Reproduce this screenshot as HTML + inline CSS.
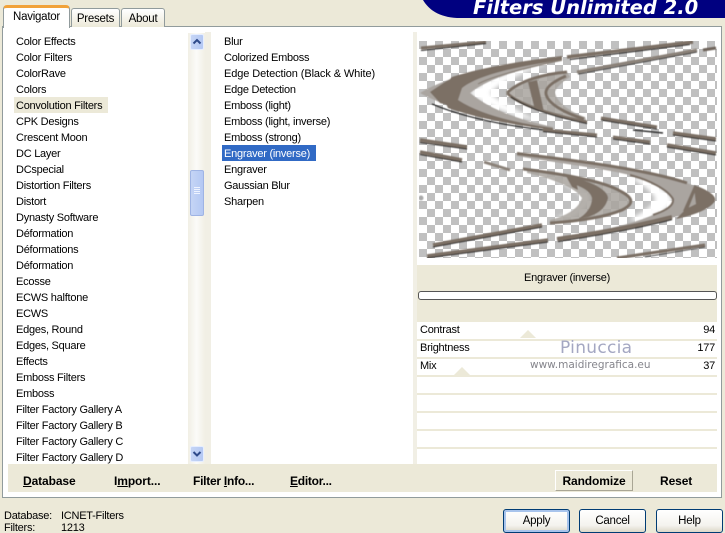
<!DOCTYPE html>
<html><head><meta charset="utf-8">
<style>
html,body{margin:0;padding:0;width:725px;height:533px;overflow:hidden;background:#ece9d8}
body{position:relative;font-family:"Liberation Sans",sans-serif;font-size:11px;color:#000;letter-spacing:-.25px}
.a{position:absolute}
.t{position:absolute;white-space:nowrap;line-height:16px;height:16px}
.b{font-weight:bold;font-size:12px;letter-spacing:-.1px}
u{text-decoration:underline}
.row{position:absolute;left:417px;width:300px;height:16px;background:#fff;border-bottom:2px solid #ece9d8}
.btn{position:absolute;top:509px;height:22px;border:1px solid #003c74;border-radius:3px;background:linear-gradient(#fff,#f4f3ee 70%,#dcd8c8);text-align:center;line-height:23px;font-size:11.5px}
.sb{position:absolute;left:190px;width:14px;background:linear-gradient(90deg,#c5d5f5,#b4c8f4);border:1px solid #e6eeff;box-sizing:border-box;border-radius:2px}
.tab{position:absolute;background:linear-gradient(#fff,#ece9d8);border:1px solid #919b9c;border-bottom:none;border-radius:3px 3px 0 0;box-sizing:border-box;text-align:center;font-size:11.5px}
</style></head><body>

<!-- logo -->
<svg class="a" style="left:415px;top:0" width="310" height="20"><path d="M8 0 C14 10 24 17 42 18 L310 18 L310 0 Z" fill="#000080"/></svg>
<div class="a" style="left:473px;top:-3px;width:226px;font:italic bold 19.5px/22px 'DejaVu Sans',sans-serif;color:#fff;white-space:nowrap;letter-spacing:0">Filters Unlimited 2.0</div>

<!-- panel -->
<div class="a" style="left:2px;top:26px;width:720px;height:472px;box-sizing:border-box;border:1px solid #919b9c;background:#fff"></div>

<!-- tabs -->
<div class="tab" style="left:71px;top:8px;width:49px;height:19px;line-height:20px">Presets</div>
<div class="tab" style="left:121px;top:8px;width:44px;height:19px;line-height:20px">About</div>
<div class="a" style="left:3px;top:5px;width:67px;height:23px;box-sizing:border-box;background:#fff;border:1px solid #919b9c;border-top:3px solid #f1a23a;border-bottom:none;border-radius:4px 4px 0 0;text-align:center;line-height:18px;font-size:11.5px">Navigator</div>

<!-- beige separators -->
<div class="a" style="left:205px;top:32px;width:6px;height:432px;background:#f1efe5"></div>
<div class="a" style="left:413px;top:32px;width:4px;height:432px;background:#f1efe5"></div>
<div class="a" style="left:8px;top:464px;width:709px;height:28px;background:#ece9d8"></div>

<!-- scrollbar -->
<div class="a" style="left:188px;top:33px;width:17px;height:431px;background:linear-gradient(90deg,#f1efe5,#fbfbf8 50%,#f1efe5)"></div>
<div class="sb" style="top:34px;height:16px"></div>
<svg class="a" style="left:190px;top:34px" width="14" height="16"><path d="M3.5 9.5 L7 6 L10.5 9.5" fill="none" stroke="#2e4a8a" stroke-width="2"/></svg>
<div class="sb" style="top:170px;height:46px;border-color:#9fb4e4"></div>
<svg class="a" style="left:190px;top:186px" width="14" height="12"><path d="M4 1.5H10M4 3.5H10M4 5.5H10M4 7.5H10" stroke="#eef3ff" stroke-width="1"/></svg>
<div class="sb" style="top:446px;height:16px"></div>
<svg class="a" style="left:190px;top:446px" width="14" height="16"><path d="M3.5 6 L7 9.5 L10.5 6" fill="none" stroke="#2e4a8a" stroke-width="2"/></svg>

<!-- list 1 -->
<div class="a" style="left:14px;top:97px;width:94px;height:16px;background:#ece9d8"></div>
<div class="a" style="left:16px;top:34px;width:170px;height:430px;overflow:hidden;line-height:16px;white-space:nowrap">Color Effects<br>Color Filters<br>ColorRave<br>Colors<br>Convolution Filters<br>CPK Designs<br>Crescent Moon<br>DC Layer<br>DCspecial<br>Distortion Filters<br>Distort<br>Dynasty Software<br>Déformation<br>Déformations<br>Déformation<br>Ecosse<br>ECWS halftone<br>ECWS<br>Edges, Round<br>Edges, Square<br>Effects<br>Emboss Filters<br>Emboss<br>Filter Factory Gallery A<br>Filter Factory Gallery B<br>Filter Factory Gallery C<br>Filter Factory Gallery D</div>

<!-- list 2 -->
<div class="a" style="left:222px;top:145px;width:94px;height:16px;background:#316ac5"></div>
<div class="a" style="left:224px;top:34px;width:185px;line-height:16px;white-space:nowrap">Blur<br>Colorized Emboss<br><span style="letter-spacing:-.1px">Edge Detection (Black &amp; White)</span><br>Edge Detection<br>Emboss (light)<br>Emboss (light, inverse)<br>Emboss (strong)<br><span style="color:#fff">Engraver (inverse)</span><br>Engraver<br>Gaussian Blur<br>Sharpen</div>

<!-- preview -->
<svg class="a" style="left:419px;top:41px" width="298" height="217" viewBox="419 41 298 217">
<defs>
<pattern id="c" x="419" y="41" width="16" height="16" patternUnits="userSpaceOnUse">
<rect x="0" y="0" width="16" height="16" fill="#fff"/>
<rect x="0" y="0" width="8" height="8" fill="#c0c0c0"/><rect x="8" y="8" width="8" height="8" fill="#c0c0c0"/>
</pattern>
<filter id="s" x="-5%" y="-5%" width="110%" height="110%"><feGaussianBlur stdDeviation=".45"/></filter>
<filter id="h" x="-20%" y="-20%" width="140%" height="140%"><feGaussianBlur stdDeviation="2"/></filter>
</defs>
<rect x="419" y="41" width="298" height="217" fill="url(#c)"/>
<!-- white halos -->
<g filter="url(#h)" fill="#fff">
<path d="M550 63 Q490 74 470 93 Q490 110 540 122 Q505 105 490 93 Q505 78 550 63Z"/>
<path d="M540 174 Q575 186 583 198 Q578 210 555 219 L572 218 Q592 205 590 195 Q575 182 540 172 Z"/>
<path d="M640 178 Q670 190 672 200 Q670 212 640 222 L630 219 Q655 207 655 198 Q650 188 630 178 Z"/>
</g>
<g filter="url(#s)">
<!-- top strokes -->
<path d="M421 48 L486 42" stroke="#7b7065" stroke-width="3"/><path d="M421 50.5 L486 43.5" stroke="#1c1c1c" stroke-width="1"/>
<path d="M567 57 L693 42" stroke="#7b7065" stroke-width="3.5"/><path d="M570 59.5 L690 44.5" stroke="#222" stroke-width="1"/>
<path d="M577 72 L697 50" stroke="#8a8178" stroke-width="3"/><path d="M578 74 L697 52" stroke="#333" stroke-width="1"/>
<path d="M703 50 L716 48" stroke="#6f655b" stroke-width="3"/>
<!-- big left crescent -->
<path d="M562 56 C515 62 455 72 420 93 C455 112 505 124 553 130 L553 127 C515 119 488 108 470 93 C490 77 525 68 562 61 Z" fill="#aaa5a0"/>
<path d="M562 56 C515 62 480 68 452 77 L440 90 L448 108 C480 119 515 125 553 130 L553 128 C510 122 480 114 458 100 L462 88 C480 74 520 66 562 60 Z" fill="#7b7065"/>
<path d="M430 92 L445 82 L456 76 L459 84 L450 92 L447 105 L440 103 Z" fill="#7b7065"/>
<path d="M478 84 C490 77 525 68 562 60" fill="none" stroke="#8a8178" stroke-width="1.2"/>
<path d="M432 104 C470 120 515 127 553 131" fill="none" stroke="#151515" stroke-width="1.1"/>
<!-- second crescent -->
<path d="M567 72 C545 74 520 80 507 93 C515 103 550 115 587 122 L585 117 C570 112 556 102 555 92 C557 86 565 80 570 77 Z" fill="#a8a39e" fill-opacity=".85"/>
<path d="M507 93 C520 80 545 74 567 72" fill="none" stroke="#7b7065" stroke-width="3"/>
<path d="M507 93 C518 104 550 115 587 122" fill="none" stroke="#7b7065" stroke-width="3"/>
<path d="M528 82 L537 80 L544 112 L535 110 Z" fill="#7b7065"/>
<path d="M566 76 C552 82 545 88 546 94 C548 104 565 113 584 119" fill="none" stroke="#7b7065" stroke-width="3"/>
<path d="M511 97 C530 110 560 118 587 123.5" fill="none" stroke="#151515" stroke-width="1"/>
<path d="M601 118 L657 127" stroke="#7b7065" stroke-width="3"/><path d="M601 120 L657 129" stroke="#151515" stroke-width="1"/>
<!-- mid lines -->
<path d="M420 140 L467 147" stroke="#7b7065" stroke-width="3.5"/><path d="M420 142.5 L467 149" stroke="#222" stroke-width="1"/>
<path d="M420 152 L462 160" stroke="#7b7065" stroke-width="3.5"/><path d="M420 154.5 L462 162" stroke="#222" stroke-width="1"/>
<path d="M484 162 L510 170" stroke="#8a8178" stroke-width="3"/>
<path d="M543 130 L597 135" stroke="#7b7065" stroke-width="3"/><path d="M543 131.5 L597 137" stroke="#222" stroke-width="1"/>
<path d="M613 137 L650 142" stroke="#7b7065" stroke-width="3"/><path d="M613 139 L650 144" stroke="#222" stroke-width="1"/>
<path d="M633 130 L663 133" stroke="#333" stroke-width="1.5"/>
<path d="M673 133 L716 139" stroke="#7b7065" stroke-width="3.5"/><path d="M673 135 L716 141" stroke="#222" stroke-width="1"/>
<path d="M667 145 L716 153" stroke="#7b7065" stroke-width="3.5"/><path d="M667 147 L716 155" stroke="#222" stroke-width="1"/>
<!-- big right crescent -->
<path d="M517 152 C570 160 640 168 687 183 C705 190 715 195 714 201 C710 208 690 214 670 218 C640 226 600 233 557 240 L557 237 C600 231 630 225 653 215 C668 210 674 205 673 199 C668 190 650 180 630 175 C600 168 550 162 517 156 Z" fill="#aaa5a0"/>
<path d="M517 153.5 C570 160 640 168 687 183" fill="none" stroke="#7b7065" stroke-width="3"/>
<path d="M630 175 C650 180 668 190 673 199 C674 205 668 210 653 215" fill="none" stroke="#7b7065" stroke-width="2"/>
<path d="M557 239 C600 233 640 225 672 217" fill="none" stroke="#7b7065" stroke-width="4"/>
<path d="M694 185 C708 190 717 196 715 201 C710 209 695 215 676 219 L686 209 L696 204 L695 196 Z" fill="#7b7065"/>
<path d="M683 211 L694 186 L697 187 L687 212 Z" fill="#7b7065"/>
<path d="M558 241.5 C600 235 640 228 672 219.5" fill="none" stroke="#151515" stroke-width="1"/>
<!-- inner right crescent -->
<path d="M527 170 C570 175 605 182 622 192 C634 198 634 204 627 206 C610 216 580 220 550 223 L550 220 C565 216 578 210 582 198 C575 187 550 178 527 173 Z" fill="#a8a39e" fill-opacity=".85"/>
<path d="M523 169 C570 175 605 182 620 191 C634 198 634 204 622 210 C605 217 580 221 550 223" fill="none" stroke="#7b7065" stroke-width="3"/>
<path d="M568 177 C590 180 608 190 608 198 C606 207 600 213 588 217 L578 219 C585 215 592 208 592 198 C590 190 580 186 570 183 Z" fill="#7b7065"/>
<path d="M566 176 L575 177 L578 190 L572 187 Z" fill="#7b7065"/>
<!-- lower lines -->
<path d="M433 245 L542 225" stroke="#7b7065" stroke-width="3.5"/><path d="M433 247 L542 227" stroke="#222" stroke-width="1"/>
<path d="M427 256 L548 240" stroke="#7b7065" stroke-width="3.5"/><path d="M427 258 L548 242" stroke="#222" stroke-width="1"/>
<path d="M617 258 L705 245" stroke="#7b7065" stroke-width="3"/><path d="M645 257 L705 247" stroke="#222" stroke-width=".8"/>
<circle cx="421" cy="198" r="2.5" fill="#a9a9a9"/>
</g>
</svg>

<!-- right panel -->
<div class="a" style="left:417px;top:265px;width:300px;height:57px;background:#ece9d8"></div>
<div class="t" style="left:417px;top:270px;width:300px;text-align:center">Engraver (inverse)</div>
<div class="a" style="left:418px;top:291px;width:299px;height:9px;box-sizing:border-box;border:1px solid #555;border-radius:3px;background:#fff"></div>
<div class="row" style="top:322px;height:17px"></div>
<div class="row" style="top:341px"></div>
<div class="row" style="top:359px"></div>
<div class="row" style="top:377px"></div>
<div class="row" style="top:395px"></div>
<div class="row" style="top:413px"></div>
<div class="row" style="top:431px"></div>
<div class="row" style="top:449px;border:none;height:15px"></div>
<svg class="a" style="left:417px;top:322px" width="300" height="60"><path d="M103 16 L111 8 L119 16Z M37 53 L45 45 L53 53Z" fill="#ece9d8"/></svg>
<div class="t" style="left:420px;top:322px">Contrast</div><div class="t" style="left:615px;top:322px;width:100px;text-align:right">94</div>
<div class="t" style="left:420px;top:340px">Brightness</div><div class="t" style="left:615px;top:340px;width:100px;text-align:right">177</div>
<div class="t" style="left:420px;top:358px">Mix</div><div class="t" style="left:615px;top:358px;width:100px;text-align:right">37</div>
<div class="t" style="left:560px;top:338px;font:17px/20px 'DejaVu Sans',sans-serif;color:#a4a7c2;height:20px;letter-spacing:.3px">Pinuccia</div>
<div class="t" style="left:530px;top:358px;font:10.5px/14px 'DejaVu Sans',sans-serif;color:#85858c;height:14px;letter-spacing:0">www.maidiregrafica.eu</div>

<!-- bottom bar -->
<div class="t b" style="left:23px;top:473px"><u>D</u>atabase</div>
<div class="t b" style="left:114px;top:473px">I<u>m</u>port...</div>
<div class="t b" style="left:193px;top:473px;letter-spacing:-.25px">Filter <u>I</u>nfo...</div>
<div class="t b" style="left:290px;top:473px;letter-spacing:-.25px"><u>E</u>ditor...</div>
<div class="a b" style="left:555px;top:470px;width:78px;height:21px;box-sizing:border-box;border:1px solid;border-color:#fff #a9a695 #a9a695 #fff;text-align:center;line-height:20px;background:#ece9d8">Randomize</div>
<div class="t b" style="left:660px;top:473px">Reset</div>

<!-- status -->
<div class="t" style="left:4px;top:508px">Database:</div><div class="t" style="left:61px;top:508px">ICNET-Filters</div>
<div class="t" style="left:4px;top:520px">Filters:</div><div class="t" style="left:61px;top:520px">1213</div>

<!-- buttons -->
<div class="btn" style="left:503px;width:65px;box-shadow:inset 0 0 0 2px #a8c4ec">Apply</div>
<div class="btn" style="left:579px;width:65px">Cancel</div>
<div class="btn" style="left:656px;width:65px">Help</div>
</body></html>
